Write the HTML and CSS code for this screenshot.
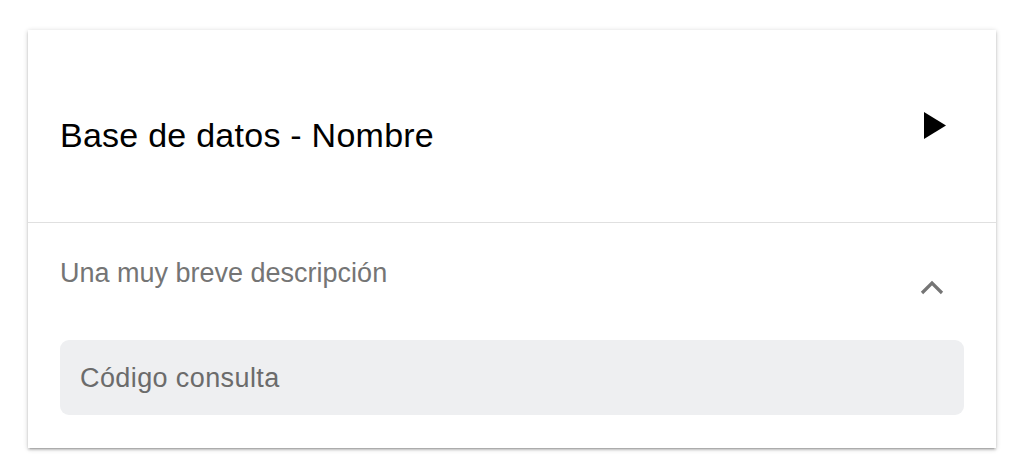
FILE: index.html
```html
<!DOCTYPE html>
<html lang="es">
<head>
<meta charset="utf-8">
<title>Base de datos</title>
<link rel="stylesheet" href="styles.css">
</head>
<body>
<div class="page">
  <section class="card">
    <header class="card-header">
      <h1 class="title">Base de datos - Nombre</h1>
      <svg class="play" width="22" height="27" viewBox="0 0 22 27" aria-hidden="true">
        <path d="M0 0 L22 13.5 L0 27 Z" fill="#000"/>
      </svg>
    </header>
    <div class="card-body">
      <div class="desc-row">
        <p class="desc">Una muy breve descripción</p>
        <svg class="chevron" width="24" height="15" viewBox="0 0 24 15" aria-hidden="true">
          <path d="M2 13 L12 3 L22 13" fill="none" stroke="#757575" stroke-width="3.2"/>
        </svg>
      </div>
      <div class="code-box">Código consulta</div>
    </div>
  </section>
</div>
</body>
</html>
```
FILE: styles.css
```css
html, body {
  margin: 0;
  padding: 0;
  background: #ffffff;
}

body {
  font-family: "Liberation Sans", Arial, Helvetica, sans-serif;
}

.page {
  padding: 30px 20px 22px 28px;
}

.card {
  background: #ffffff;
  box-shadow: 0 2px 2px rgba(0, 0, 0, 0.14), 0 3px 1px -2px rgba(0, 0, 0, 0.12), 0 1px 5px rgba(0, 0, 0, 0.2);
}

.card-header {
  display: flex;
  align-items: flex-start;
  justify-content: space-between;
  padding: 85px 50px 67px 32px;
  border-bottom: 1px solid #e0e0e0;
}

.title {
  margin: 0;
  font-size: 34px;
  font-weight: 400;
  line-height: 40px;
  letter-spacing: 0.25px;
  color: #000000;
}

.play {
  display: block;
  margin-top: -3px;
}

.card-body {
  padding: 34px 32px 33px 32px;
}

.desc-row {
  display: flex;
  justify-content: space-between;
  align-items: flex-start;
}

.desc {
  margin: 0;
  font-size: 27px;
  line-height: 32px;
  color: #757575;
}

.chevron {
  display: block;
  margin-top: 23px;
  margin-right: 20px;
}

.code-box {
  margin-top: 45px;
  height: 75px;
  display: flex;
  align-items: center;
  padding: 2px 20px 0 20px;
  box-sizing: border-box;
  background: #eeeff1;
  border-radius: 9px;
  font-size: 27px;
  letter-spacing: 0.4px;
  color: #6b6b6b;
}
```
